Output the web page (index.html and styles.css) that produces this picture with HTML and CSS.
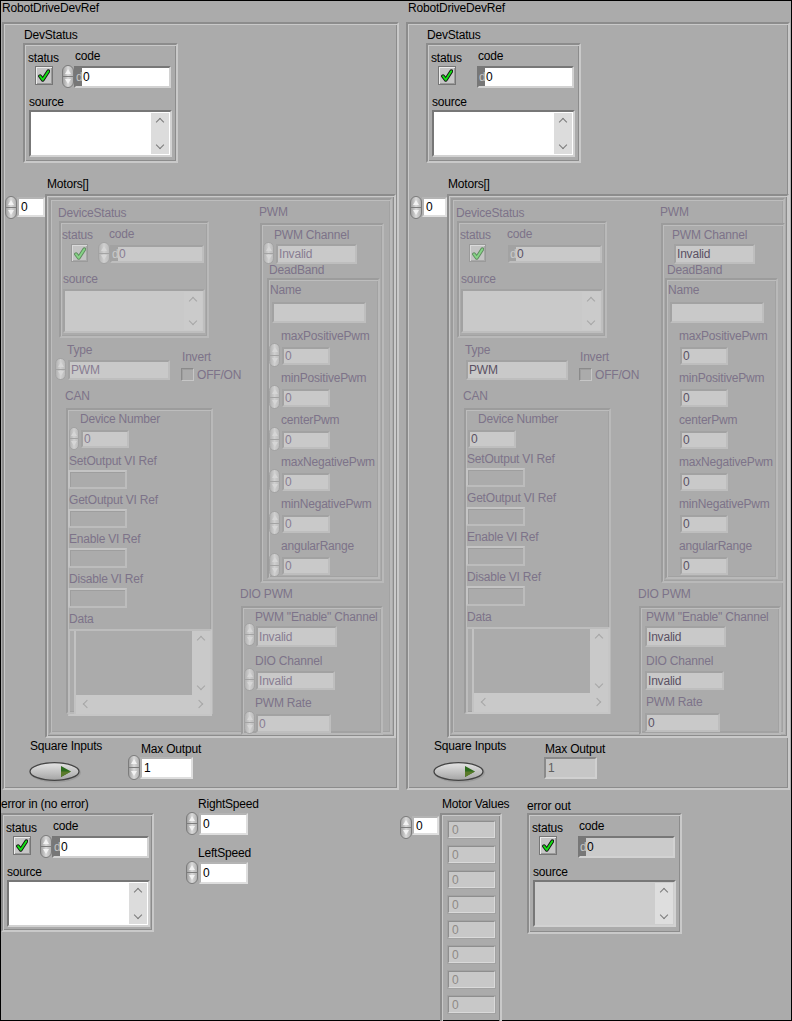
FILE: index.html
```html
<!DOCTYPE html>
<html><head><meta charset="utf-8"><title>RobotDrive</title><link rel="stylesheet" href="styles.css"></head>
<body>
<div class="fp">

<!-- LEFT CLUSTER -->
<div class="rd rdL">
  <span class="lbl">RobotDriveDevRef</span>
  <div class="frm rdf">
    <div class="dsg">
      <span class="lbl">DevStatus</span>
      <div class="frm ec">
        <div class="ec-top">
          <div class="ec-st"><span class="lbl">status</span><span class="chk"><svg width="12" height="13" viewBox="0 0 12 13"><path class="ckb" d="M2 7.2 4.8 10.8 10.3 2.2"/><path class="ckf" d="M2 7.2 4.8 10.8 10.3 2.2"/></svg></span></div>
          <div class="ec-code"><span class="lbl">code</span><div class="row"><span class="sp"></span><span class="nf"><span class="rx">d</span><span class="v">0</span></span></div></div>
        </div>
        <div class="ec-src"><span class="lbl">source</span><div class="str"><span class="sa"></span><span class="sb"><i class="up"></i><i class="dn"></i></span></div></div>
      </div>
    </div>

    <div class="mg">
      <span class="lbl">Motors[]</span>
      <div class="mrow">
        <div class="idx"><span class="sp"></span><span class="nl ix">0</span></div>
        <div class="frm arr">
          <div class="dfrm el dis">
            <div class="elc">
              <div class="lcol">
                <div class="dsg2">
                  <span class="lbl">DeviceStatus</span>
                  <div class="dfrm ec sm">
                    <div class="ec-top">
                      <div class="ec-st"><span class="lbl">status</span><span class="chk"><svg width="12" height="13" viewBox="0 0 12 13"><path class="ckb" d="M2 7.2 4.8 10.8 10.3 2.2"/><path class="ckf" d="M2 7.2 4.8 10.8 10.3 2.2"/></svg></span></div>
                      <div class="ec-code"><span class="lbl">code</span><div class="row"><span class="sp"></span><span class="df nf"><span class="rx">d</span><span class="v">0</span></span></div></div>
                    </div>
                    <div class="ec-src"><span class="lbl">source</span><div class="str dstr"><span class="sa"></span><span class="sb"><i class="up"></i><i class="dn"></i></span></div></div>
                  </div>
                </div>
                <div class="tyrow">
                  <div class="tyc"><span class="lbl">Type</span><div class="row"><span class="sp"></span><span class="df tyf"><span class="v">PWM</span></span></div></div>
                  <div class="inv"><span class="lbl">Invert</span><div class="row"><span class="cb"></span><span class="lbl onoff">OFF/ON</span></div></div>
                </div>
                <div class="cang">
                  <span class="lbl">CAN</span>
                  <div class="dfrm can">
                    <div class="dnc"><span class="lbl">Device Number</span><div class="row"><span class="sp"></span><span class="df dnf"><span class="v">0</span></span></div></div>
                    <div class="rc"><span class="lbl">SetOutput VI Ref</span><span class="ref"></span></div>
                    <div class="rc"><span class="lbl">GetOutput VI Ref</span><span class="ref"></span></div>
                    <div class="rc"><span class="lbl">Enable VI Ref</span><span class="ref"></span></div>
                    <div class="rc"><span class="lbl">Disable VI Ref</span><span class="ref"></span></div>
                    <div class="rc"><span class="lbl">Data</span>
                      <div class="data"><div class="dg"><span class="dc"></span><span class="dvs"><i class="up"></i><i class="dn"></i></span><span class="dhs"><i class="lt"></i><i class="rt"></i></span></div></div>
                    </div>
                  </div>
                </div>
              </div>
              <div class="rcol">
                <div class="pwmg">
                  <span class="lbl">PWM</span>
                  <div class="dfrm pwm">
                    <div class="pch"><span class="lbl">PWM Channel</span><div class="row"><span class="sp"></span><span class="df pchf"><span class="v">Invalid</span></span></div></div>
                    <div class="dbg">
                      <span class="lbl">DeadBand</span>
                      <div class="dfrm db">
                        <div class="nm"><span class="lbl">Name</span><span class="df nmb"></span></div>
                        <div class="pr pr1"><span class="lbl">maxPositivePwm</span><div class="row"><span class="sp"></span><span class="df prf"><span class="v">0</span></span></div></div>
                        <div class="pr"><span class="lbl">minPositivePwm</span><div class="row"><span class="sp"></span><span class="df prf"><span class="v">0</span></span></div></div>
                        <div class="pr"><span class="lbl">centerPwm</span><div class="row"><span class="sp"></span><span class="df prf"><span class="v">0</span></span></div></div>
                        <div class="pr"><span class="lbl">maxNegativePwm</span><div class="row"><span class="sp"></span><span class="df prf"><span class="v">0</span></span></div></div>
                        <div class="pr"><span class="lbl">minNegativePwm</span><div class="row"><span class="sp"></span><span class="df prf"><span class="v">0</span></span></div></div>
                        <div class="pr"><span class="lbl">angularRange</span><div class="row"><span class="sp"></span><span class="df prf"><span class="v">0</span></span></div></div>
                      </div>
                    </div>
                  </div>
                </div>
                <div class="diog">
                  <span class="lbl">DIO PWM</span>
                  <div class="dfrm dio">
                    <div class="dr dr1"><span class="lbl">PWM "Enable" Channel</span><div class="row"><span class="sp"></span><span class="df f1"><span class="v">Invalid</span></span></div></div>
                    <div class="dr dr2"><span class="lbl">DIO Channel</span><div class="row"><span class="sp"></span><span class="df f2"><span class="v">Invalid</span></span></div></div>
                    <div class="dr dr3"><span class="lbl">PWM Rate</span><div class="row"><span class="sp"></span><span class="df f3"><span class="v">0</span></span></div></div>
                  </div>
                </div>
              </div>
            </div>
          </div>
        </div>
      </div>
    </div>

    <div class="brow">
      <div class="sq"><span class="lbl">Square Inputs</span>
        <svg width="53" height="22" viewBox="0 0 53 22"><defs><linearGradient id="bgA" x1="0" y1="0" x2="0" y2="1"><stop offset="0" stop-color="#e4e4e4"/><stop offset="1" stop-color="#a4a4a4"/></linearGradient></defs><ellipse cx="26.5" cy="11.5" rx="25.5" ry="10" fill="#9c9c9c"/><ellipse cx="25.5" cy="10.5" rx="24.5" ry="8.8" fill="url(#bgA)" stroke="#444" stroke-width="1.3"/><path d="M32 5 42 10.5 32 16Z" fill="#2c6a1c"/><path d="M32 10.5 42 10.5 32 16Z" fill="#5a7a2a"/></svg>
      </div>
      <div class="mo"><span class="lbl">Max Output</span><div class="row"><span class="sp"></span><span class="nl mof"><span class="v">1</span></span></div></div>
    </div>
  </div>
</div>

<!-- RIGHT CLUSTER -->
<div class="rd rdR R">
  <span class="lbl">RobotDriveDevRef</span>
  <div class="frm rdf">
    <div class="dsg">
      <span class="lbl">DevStatus</span>
      <div class="frm ec">
        <div class="ec-top">
          <div class="ec-st"><span class="lbl">status</span><span class="chk"><svg width="12" height="13" viewBox="0 0 12 13"><path class="ckb" d="M2 7.2 4.8 10.8 10.3 2.2"/><path class="ckf" d="M2 7.2 4.8 10.8 10.3 2.2"/></svg></span></div>
          <div class="ec-code"><span class="lbl">code</span><div class="row"><span class="sp gh"></span><span class="nf"><span class="rx">d</span><span class="v">0</span></span></div></div>
        </div>
        <div class="ec-src"><span class="lbl">source</span><div class="str"><span class="sa"></span><span class="sb"><i class="up"></i><i class="dn"></i></span></div></div>
      </div>
    </div>

    <div class="mg">
      <span class="lbl">Motors[]</span>
      <div class="mrow">
        <div class="idx"><span class="sp"></span><span class="nl ix">0</span></div>
        <div class="frm arr">
          <div class="dfrm el dis">
            <div class="elc">
              <div class="lcol">
                <div class="dsg2">
                  <span class="lbl">DeviceStatus</span>
                  <div class="dfrm ec sm">
                    <div class="ec-top">
                      <div class="ec-st"><span class="lbl">status</span><span class="chk"><svg width="12" height="13" viewBox="0 0 12 13"><path class="ckb" d="M2 7.2 4.8 10.8 10.3 2.2"/><path class="ckf" d="M2 7.2 4.8 10.8 10.3 2.2"/></svg></span></div>
                      <div class="ec-code"><span class="lbl">code</span><div class="row"><span class="sp gh"></span><span class="df nf"><span class="rx">d</span><span class="v">0</span></span></div></div>
                    </div>
                    <div class="ec-src"><span class="lbl">source</span><div class="str dstr"><span class="sa"></span><span class="sb"><i class="up"></i><i class="dn"></i></span></div></div>
                  </div>
                </div>
                <div class="tyrow">
                  <div class="tyc"><span class="lbl">Type</span><div class="row"><span class="sp gh"></span><span class="df tyf"><span class="v">PWM</span></span></div></div>
                  <div class="inv"><span class="lbl">Invert</span><div class="row"><span class="cb"></span><span class="lbl onoff">OFF/ON</span></div></div>
                </div>
                <div class="cang">
                  <span class="lbl">CAN</span>
                  <div class="dfrm can">
                    <div class="dnc"><span class="lbl">Device Number</span><div class="row"><span class="df dnf"><span class="v">0</span></span></div></div>
                    <div class="rc"><span class="lbl">SetOutput VI Ref</span><span class="ref"></span></div>
                    <div class="rc"><span class="lbl">GetOutput VI Ref</span><span class="ref"></span></div>
                    <div class="rc"><span class="lbl">Enable VI Ref</span><span class="ref"></span></div>
                    <div class="rc"><span class="lbl">Disable VI Ref</span><span class="ref"></span></div>
                    <div class="rc"><span class="lbl">Data</span>
                      <div class="data"><div class="dg"><span class="dc"></span><span class="dvs"><i class="up"></i><i class="dn"></i></span><span class="dhs"><i class="lt"></i><i class="rt"></i></span></div></div>
                    </div>
                  </div>
                </div>
              </div>
              <div class="rcol">
                <div class="pwmg">
                  <span class="lbl">PWM</span>
                  <div class="dfrm pwm">
                    <div class="pch"><span class="lbl">PWM Channel</span><div class="row"><span class="sp gh"></span><span class="df pchf"><span class="v">Invalid</span></span></div></div>
                    <div class="dbg">
                      <span class="lbl">DeadBand</span>
                      <div class="dfrm db">
                        <div class="nm"><span class="lbl">Name</span><span class="df nmb"></span></div>
                        <div class="pr pr1"><span class="lbl">maxPositivePwm</span><div class="row"><span class="sp gh"></span><span class="df prf"><span class="v">0</span></span></div></div>
                        <div class="pr"><span class="lbl">minPositivePwm</span><div class="row"><span class="sp gh"></span><span class="df prf"><span class="v">0</span></span></div></div>
                        <div class="pr"><span class="lbl">centerPwm</span><div class="row"><span class="sp gh"></span><span class="df prf"><span class="v">0</span></span></div></div>
                        <div class="pr"><span class="lbl">maxNegativePwm</span><div class="row"><span class="sp gh"></span><span class="df prf"><span class="v">0</span></span></div></div>
                        <div class="pr"><span class="lbl">minNegativePwm</span><div class="row"><span class="sp gh"></span><span class="df prf"><span class="v">0</span></span></div></div>
                        <div class="pr"><span class="lbl">angularRange</span><div class="row"><span class="sp gh"></span><span class="df prf"><span class="v">0</span></span></div></div>
                      </div>
                    </div>
                  </div>
                </div>
                <div class="diog">
                  <span class="lbl">DIO PWM</span>
                  <div class="dfrm dio">
                    <div class="dr dr1"><span class="lbl">PWM "Enable" Channel</span><div class="row"><span class="df f1"><span class="v">Invalid</span></span></div></div>
                    <div class="dr dr2"><span class="lbl">DIO Channel</span><div class="row"><span class="df f2"><span class="v">Invalid</span></span></div></div>
                    <div class="dr dr3"><span class="lbl">PWM Rate</span><div class="row"><span class="df f3"><span class="v">0</span></span></div></div>
                  </div>
                </div>
              </div>
            </div>
          </div>
        </div>
      </div>
    </div>

    <div class="brow">
      <div class="sq"><span class="lbl">Square Inputs</span>
        <svg width="53" height="22" viewBox="0 0 53 22"><ellipse cx="26.5" cy="11.5" rx="25.5" ry="10" fill="#9c9c9c"/><ellipse cx="25.5" cy="10.5" rx="24.5" ry="8.8" fill="url(#bgA)" stroke="#444" stroke-width="1.3"/><path d="M32 5 42 10.5 32 16Z" fill="#2c6a1c"/><path d="M32 10.5 42 10.5 32 16Z" fill="#5a7a2a"/></svg>
      </div>
      <div class="mo"><span class="lbl">Max Output</span><div class="row"><span class="sp gh"></span><span class="nl gr mof"><span class="v">1</span></span></div></div>
    </div>
  </div>
</div>

<!-- BOTTOM -->
<div class="ein">
  <span class="lbl">error in (no error)</span>
  <div class="frm ec">
    <div class="ec-top">
      <div class="ec-st"><span class="lbl">status</span><span class="chk"><svg width="12" height="13" viewBox="0 0 12 13"><path class="ckb" d="M2 7.2 4.8 10.8 10.3 2.2"/><path class="ckf" d="M2 7.2 4.8 10.8 10.3 2.2"/></svg></span></div>
      <div class="ec-code"><span class="lbl">code</span><div class="row"><span class="sp"></span><span class="nf"><span class="rx">d</span><span class="v">0</span></span></div></div>
    </div>
    <div class="ec-src"><span class="lbl">source</span><div class="str"><span class="sa"></span><span class="sb"><i class="up"></i><i class="dn"></i></span></div></div>
  </div>
</div>

<div class="spd rsp"><span class="lbl">RightSpeed</span><div class="row"><span class="sp"></span><span class="nl"><span class="v">0</span></span></div></div>
<div class="spd lsp"><span class="lbl">LeftSpeed</span><div class="row"><span class="sp"></span><span class="nl"><span class="v">0</span></span></div></div>

<div class="mv">
  <span class="lbl">Motor Values</span>
  <div class="mvrow">
    <div class="idx"><span class="sp"></span><span class="nl ix">0</span></div>
    <div class="frm mva">
      <span class="mve">0</span><span class="mve">0</span><span class="mve">0</span><span class="mve">0</span>
      <span class="mve">0</span><span class="mve">0</span><span class="mve">0</span><span class="mve">0</span>
    </div>
  </div>
</div>

<div class="eout">
  <span class="lbl">error out</span>
  <div class="frm ec">
    <div class="ec-top">
      <div class="ec-st"><span class="lbl">status</span><span class="chk"><svg width="12" height="13" viewBox="0 0 12 13"><path class="ckb" d="M2 7.2 4.8 10.8 10.3 2.2"/><path class="ckf" d="M2 7.2 4.8 10.8 10.3 2.2"/></svg></span></div>
      <div class="ec-code"><span class="lbl">code</span><div class="row"><span class="sp gh"></span><span class="nf gr"><span class="rx">d</span><span class="v">0</span></span></div></div>
    </div>
    <div class="ec-src"><span class="lbl">source</span><div class="str gr"><span class="sa"></span><span class="sb"><i class="up"></i><i class="dn"></i></span></div></div>
  </div>
</div>

</div>
</body></html>
```

FILE: styles.css
```css
*{box-sizing:border-box;margin:0;padding:0}
html,body{background:#ababab}
body{margin:0;font:12px/14px "Liberation Sans",Arial,sans-serif;letter-spacing:-0.2px;color:#000}
i{font-style:normal}
.fp{position:relative;width:792px;height:1021px;overflow:hidden;background:#ababab;box-shadow:inset 0 0 0 1px #000}
.lbl{display:block;height:14px;white-space:nowrap}
.dis .lbl{color:#7d7389}
.row{display:flex;align-items:flex-start}

/* frames */
.frm{border:2px solid;border-color:#8c8c8c #c9c9c9 #c9c9c9 #8c8c8c;box-shadow:inset 1px 1px 0 #c9c9c9,inset -1px -1px 0 #8c8c8c}
.dfrm{border:2px solid;border-color:#9c9c9c #b9b9b9 #b9b9b9 #9c9c9c;box-shadow:inset 1px 1px 0 #bdbdbd,inset -1px -1px 0 #a2a2a2}

/* spinner */
.sp{flex:none;position:relative;width:12px;height:23px;border-radius:6px;border:1px solid #7c7c7c;background:linear-gradient(#7c7c7c,#7c7c7c) center/100% 1px no-repeat,linear-gradient(90deg,#a2a2a2,#dadada 50%,#b2b2b2)}
.sp::before,.sp::after{content:"";position:absolute;left:50%;margin-left:-3px;border-left:3px solid transparent;border-right:3px solid transparent}
.sp::before{top:3px;border-bottom:5px solid #f2f2f2}
.sp::after{bottom:3px;border-top:5px solid #f2f2f2}
.dis .sp{border-color:#a3a3a3;background:linear-gradient(#a3a3a3,#a3a3a3) center/100% 1px no-repeat,linear-gradient(90deg,#b2b2b2,#d0d0d0 50%,#bcbcbc)}
.dis .sp::before{border-bottom-color:#d6d6d6}
.dis .sp::after{border-top-color:#d6d6d6}
.sp.gh{visibility:hidden}

/* fields */
.nf{display:flex;align-items:center;border:2px solid;border-color:#777 #d2d2d2 #d2d2d2 #777;background:#fff;overflow:hidden;flex:none}
.nf.gr{background:#cbcbcb}
.rx{align-self:stretch;display:flex;align-items:center;width:6px;flex:none;background:#777;color:#c2c2c2;overflow:visible}
.v{padding-left:1px;white-space:nowrap}
.nl{display:flex;align-items:center;border:2px solid;border-color:#b4b4b4 #dedede #dedede #b4b4b4;background:#fff;padding-left:1px;flex:none}
.nl.gr{background:#c6c6c6;color:#5e5e5e;border-color:#8a8a8a #d0d0d0 #d0d0d0 #8a8a8a}
.df{display:flex;align-items:center;border:2px solid;border-color:#a2a2a2 #bebebe #bebebe #a2a2a2;background:#c9c9c9;color:#887d92;flex:none;overflow:hidden}
.df .rx{background:#a2a2a2;color:#c8c8c8}
.R .df{color:#5a5163}

/* status checkbox */
.chk{display:flex;align-items:center;justify-content:center;width:18px;height:19px;background:#c6c6c6;border:1px solid #767676;box-shadow:inset 1px 1px 0 #ececec,inset -1px -1px 0 #9a9a9a}
.chk svg{display:block}
.ckb{fill:none;stroke:#151515;stroke-width:3.8;stroke-linecap:round;stroke-linejoin:round}
.ckf{fill:none;stroke:#14e014;stroke-width:1.9;stroke-linecap:round;stroke-linejoin:round}
.dis .chk{border-color:#9a9a9a;background:#c4c4c4;box-shadow:inset 1px 1px 0 #dadada,inset -1px -1px 0 #a8a8a8}
.dis .ckb{stroke:#5f8a5f}
.dis .ckf{stroke:#86d486}

/* string */
.str{display:flex;border:2px solid;border-color:#777 #d2d2d2 #d2d2d2 #777;background:#fff}
.str .sa{flex:1}
.sb{position:relative;width:18px;background:#dcdcdc;margin:1px 1px 1px 0}
.up,.dn,.lt,.rt{position:absolute;width:6px;height:6px;border:solid #7a7a7a;border-width:1.5px 0 0 1.5px}
.sb .up,.dvs .up{left:6px;top:6px;transform:rotate(45deg)}
.sb .dn,.dvs .dn{left:6px;bottom:6px;transform:rotate(225deg)}
.str.gr{background:#cdcdcd}
.str.gr .sb{background:#dedede}
.dstr{border-color:#a2a2a2 #bebebe #bebebe #a2a2a2;background:#c9c9c9}
.dstr .sb{background:#cbcbcb}
.dstr .up,.dstr .dn{border-color:#a6a6a6}

/* error-style cluster */
.ec{width:155px;height:120px}
.ec-top{display:flex}
.ec-st{width:37px;padding-left:3px;flex:none}
.ec-st .lbl{margin-top:6px}
.ec-st .chk{margin:1px 0 0 7px}
.ec-code .lbl{margin:4px 0 0 13px}
.ec-code .row{margin-top:2px}
.ec-code .nf{width:97px;height:22px;margin-top:1px}
.ec-src .lbl{margin:7px 0 0 4px}
.ec-src .str{margin:1px 0 0 4px;width:143px;height:47px}
.ec.sm .ec-st{padding-left:1px}
.ec.sm .ec-st .lbl{margin-top:5px}
.ec.sm .chk{width:17px;height:18px;margin:2px 0 0 9px}
.ec.sm .ec-code .lbl{margin:4px 0 0 11px}
.ec.sm .ec-code .row{margin-top:1px}
.ec.sm .sp{height:22px}
.ec.sm .ec-code .nf{width:94px;height:18px;margin-top:3px}
.ec.sm .ec-src .lbl{margin:8px 0 0 2px}
.ec.sm .ec-src .str{margin:3px 0 0 2px;width:142px;height:44px}

/* top-level clusters on the panel canvas */
.rd{position:absolute;top:1px;display:flex;flex-direction:column;align-items:flex-start}
.rdL{left:2px}
.rdR{left:406px}
.rdR>.lbl{margin-left:2px}
.rdf{margin-top:7px;height:768px;display:flex;flex-direction:column;align-items:flex-start}
.rdL .rdf{width:397px}
.rdR .rdf{width:384px}

.dsg{margin:4px 0 0 19px}
.dsg>.lbl{margin-left:1px}
.dsg>.ec{margin-top:1px}
.rdR .dsg{margin-left:18px}

.mg{margin:14px 0 0 1px}
.mg>.lbl{margin-left:42px}
.mrow{display:flex;align-items:flex-start;margin-top:3px}
.idx{display:flex;align-items:flex-start;margin-top:2px}
.ix{width:28px;height:20px;margin-top:1px;padding-left:2px}
.rdR .mg{margin-left:2px}
.rdR .mg>.lbl{margin-left:38px}
.rdR .ix{width:25px}
.arr{padding:2px;height:544px}
.rdL .arr{width:351px}
.rdR .arr{width:342px}
.el{height:100%}
.elc{display:flex}
.rdR .elc{margin-left:-4px}

/* element left column */
.lcol{width:189px;flex:none;display:flex;flex-direction:column;align-items:flex-start}
.dsg2{margin:6px 0 0 7px}
.dsg2>.ec{margin:1px 0 0 1px;width:150px;height:117px}
.tyrow{display:flex;margin-top:5px}
.tyc{margin-left:4px}
.tyc>.lbl{margin-left:12px}
.tyc .row{margin-top:1px}
.tyc .sp{width:11px;height:22px}
.tyf{width:102px;height:20px;margin:2px 0 0 2px}
.inv{margin-left:11px}
.inv>.lbl{margin:7px 0 0 1px}
.inv .row{margin-top:4px}
.cb{display:block;width:13px;height:13px;border:1px solid;border-color:#8a8a8a #c6c6c6 #c6c6c6 #8a8a8a;box-shadow:inset 1px 1px 0 #9e9e9e}
.onoff{margin-left:3px}
.cang{margin-top:7px}
.cang>.lbl{margin-left:14px}
.can{width:147px;height:306px;margin:5px 0 0 15px;display:flex;flex-direction:column;align-items:flex-start}
.dnc>.lbl{margin:2px 0 0 12px}
.dnc .row{margin-top:1px}
.dnc .sp{width:10px;height:23px;margin-left:1px}
.dnf{width:48px;height:18px;margin:3px 0 0 2px}
.rc>.lbl{margin:4px 0 0 1px}
.ref{display:block;width:59px;height:19px;margin-top:2px;border:2px solid;border-color:#c4c4c4 #bcbcbc #bcbcbc #c4c4c4;box-shadow:inset 1px 1px 0 #9e9e9e}
.rc:nth-child(4) .ref,.rc:nth-child(5) .ref{height:20px}
.data{width:144px;height:87px;margin-top:3px;border:2px solid;border-color:#bdbdbd #c6c6c6 #c6c6c6 #bdbdbd;padding-left:4px}
.dg{height:100%;border-left:2px solid #c2c2c2;display:grid;grid-template-columns:1fr 18px;grid-template-rows:1fr 19px}
.dvs{position:relative;background:#c9c9c9}
.dhs{position:relative;grid-column:1/3;background:#c9c9c9}
.dvs .up,.dvs .dn,.dhs .lt,.dhs .rt{border-color:#a6a6a6}
.dhs .lt{left:8px;top:6px;transform:rotate(-45deg)}
.dhs .rt{right:8px;top:6px;transform:rotate(135deg)}
.rdR .dnf{margin-left:2px}

/* element right column */
.rcol{display:flex;flex-direction:column;align-items:flex-start}
.pwmg{margin:5px 0 0 19px}
.pwm{width:124px;height:360px;margin:4px 0 0 1px;display:flex;flex-direction:column;align-items:flex-start}
.pch>.lbl{margin:3px 0 0 12px}
.pch .sp{width:11px;height:22px;margin-left:1px}
.pchf{width:81px;height:20px;margin:2px 0 0 2px}
.dbg>.lbl{margin:-1px 0 0 7px}
.db{width:113px;height:301px;margin:1px 0 0 5px;display:flex;flex-direction:column;align-items:flex-start}
.nm>.lbl{margin:3px 0 0 1px}
.nmb{display:block;width:94px;height:21px;margin:5px 0 0 3px}
.pr>.lbl{margin:4px 0 0 12px}
.pr1>.lbl{margin-top:6px}
.pr .sp{width:11px;height:24px}
.prf{width:48px;height:18px;margin:4px 0 0 2px}
.diog{margin-top:4px}
.dio{width:142px;height:129px;margin:5px 0 0 1px;display:flex;flex-direction:column;align-items:flex-start}
.dr>.lbl{margin:2px 0 0 12px}
.dr .sp{width:11px;height:23px;margin-left:1px}
.dr .df{margin:3px 0 0 1px}
.dr1 .row{margin-top:-1px}
.dr2>.lbl{margin-top:7px}
.dr3>.lbl{margin-top:5px}
.dr3 .row{margin-top:1px}
.f1{width:81px;height:21px}
.f2{width:79px;height:19px}
.f3{width:75px;height:19px}
.rdR .pwmg{margin-left:22px}
.rdR .pch,.rdR .dbg{margin-left:-3px}
.rdR .dr>.lbl{margin-left:5px}
.rdR .dr .df{margin-left:4px}

/* bottom row of cluster */
.brow{display:flex;margin-top:1px}
.sq{width:99px;margin-left:25px}
.sq>.lbl{margin-left:1px}
.sq svg{display:block;margin-top:8px}
.mo>.lbl{margin:3px 0 0 13px}
.mo .row{margin-top:-1px}
.mo .sp{height:25px}
.mof{width:53px;height:22px;margin-top:2px}

/* bottom panel objects */
.ein{position:absolute;left:1px;top:797px}
.ein>.ec{margin-top:2px;width:153px;height:119px}
.spd{position:absolute;left:186px}
.rsp{top:797px}
.lsp{top:846px}
.spd>.lbl{margin-left:12px}
.spd .row{margin-top:1px}
.spd .nl{width:49px;height:22px;margin:1px 0 0 1px}
.mv{position:absolute;left:400px;top:797px}
.mv>.lbl{margin-left:42px}
.mvrow{display:flex;align-items:flex-start;margin-top:2px}
.mv .idx{margin-top:3px}
.mv .ix{width:27px;height:19px;margin-top:0}
.mva{width:62px;height:212px;margin-left:1px;padding:6px 0 0 6px;display:flex;flex-direction:column;gap:8px}
.mve{display:flex;align-items:center;width:47px;height:17px;padding-left:3px;background:#c8c8c8;color:#8e8a86;border:1px solid;border-color:#8e8e8e #dadada #dadada #8e8e8e;box-shadow:0 0 0 1px #a2a2a2}
.eout{position:absolute;left:527px;top:799px}
.eout>.ec{width:155px;height:121px}
```
